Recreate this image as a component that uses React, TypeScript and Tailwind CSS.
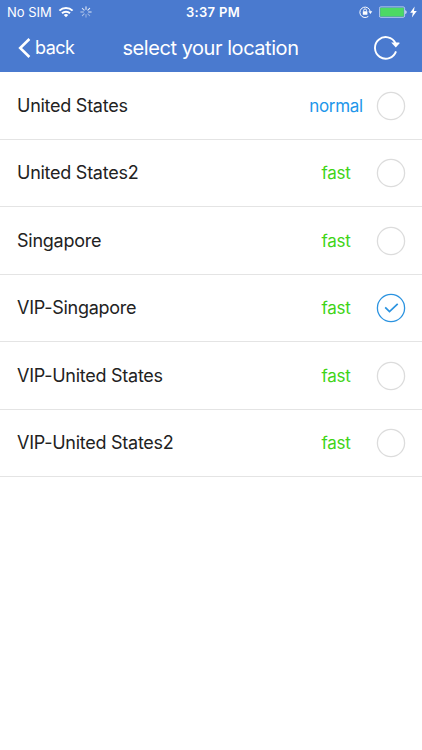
import React from "react";
import clsx from "clsx";

const locations = [
  { name: "United States", speed: "normal" },
  { name: "United States2", speed: "fast" },
  { name: "Singapore", speed: "fast" },
  { name: "VIP-Singapore", speed: "fast", selected: true },
  { name: "VIP-United States", speed: "fast" },
  { name: "VIP-United States2", speed: "fast" },
];

const spokes = [0.95, 0.9, 0.85, 0.4, 0.45, 0.55, 0.65, 0.8];

function WifiIcon() {
  return (
    <svg width="16" height="12" viewBox="0 0 16 12" fill="none" stroke="white" strokeWidth="2">
      <path d="M1.4 4.6a9.4 9.4 0 0 1 13.2 0" />
      <path d="M4 7.3a5.7 5.7 0 0 1 8 0" />
      <path d="M8 11.3 5.8 9.1a3.2 3.2 0 0 1 4.4 0z" fill="white" stroke="none" />
    </svg>
  );
}

function Spinner() {
  return (
    <svg width="12" height="12" viewBox="0 0 12 12" stroke="white" strokeWidth="1" strokeLinecap="round">
      {spokes.map((opacity, i) => (
        <path key={i} d="M6 3.4V0.8" opacity={opacity} transform={`rotate(${i * 45} 6 6)`} />
      ))}
    </svg>
  );
}

function RotationLockIcon() {
  return (
    <svg width="14" height="12" viewBox="0 0 14 12" fill="none" stroke="white">
      <path d="M9.3 10.4A5.2 5.2 0 1 1 11.2 5.4" strokeWidth="1" />
      <path d="M9.4 5.2h3.9l-1.9 2.7z" fill="white" stroke="none" />
      <rect x="3.8" y="5.2" width="4.6" height="3.6" rx="0.4" fill="white" stroke="none" />
      <path d="M4.7 5.4V4.3a1.4 1.4 0 0 1 2.8 0v1.1" strokeWidth="0.9" />
    </svg>
  );
}

function BatteryIcon() {
  return (
    <svg width="28" height="12" viewBox="0 0 28 12">
      <rect x="0.4" y="0.9" width="25.2" height="10.4" rx="1.4" fill="none" stroke="white" strokeOpacity="0.75" strokeWidth="0.8" />
      <rect x="1.2" y="1.7" width="23.6" height="8.8" rx="0.6" fill="#4cd964" />
      <path d="M26.4 4.2c1.5.3 1.5 3.5 0 3.8z" fill="white" />
    </svg>
  );
}

function StatusBar() {
  return (
    <div className="flex h-6 items-center text-[13px] leading-4">
      <div className="flex w-[186px] items-center pl-[7px]">
        <span className="w-[51px] whitespace-nowrap">No SIM</span>
        <WifiIcon />
        <span className="ml-[6px]">
          <Spinner />
        </span>
      </div>
      <span className="w-[55px] whitespace-nowrap font-semibold tracking-[0.3px]">3:37 PM</span>
      <div className="ml-auto flex items-center pr-[5px]">
        <RotationLockIcon />
        <span className="ml-[6px]">
          <BatteryIcon />
        </span>
        <svg className="ml-[3px]" width="7" height="12" viewBox="0 0 7 12">
          <path d="M4.6 0.6 0.2 6.8h2.6L1.9 11.4 6.8 5.1H4z" fill="white" />
        </svg>
      </div>
    </div>
  );
}

function NavBar() {
  return (
    <div className="grid h-12 grid-cols-[98px_226px_98px] items-center">
      <button className="flex items-center pl-[18px]">
        <svg width="13" height="20" viewBox="0 0 13 20" fill="none" stroke="white" strokeWidth="2.6">
          <path d="M11.4 1 2.2 10l9.2 9" />
        </svg>
        <span className="ml-[4px] text-[18px] leading-6 tracking-[-0.5px]">back</span>
      </button>
      <h1 className="-ml-px whitespace-nowrap text-center text-[20px] leading-6 tracking-[-0.45px]">
        select your location
      </h1>
      <button className="pl-[49px]">
        <svg width="27" height="24" viewBox="0 0 27 24" fill="none" stroke="white" strokeWidth="1.9">
          <path d="M23 15.4A10.8 10.8 0 1 1 22.5 7.2" />
          <path d="M18.2 6.4h8.2v1l-3.6 4z" fill="white" stroke="none" />
        </svg>
      </button>
    </div>
  );
}

function Radio({ selected }: { selected?: boolean }) {
  return (
    <svg width="30" height="30" viewBox="0 0 30 30" fill="none">
      <circle cx="15" cy="15" r="13.6" stroke={selected ? "#2b93e0" : "#dcdcdc"} strokeWidth="1.3" />
      {selected && <path d="m9.2 14.3 4.3 4.3 8.2-7.8" stroke="#2b93e0" strokeWidth="1.7" />}
    </svg>
  );
}

function App() {
  return (
    <div className="min-h-screen bg-white font-['Inter',sans-serif]">
      <header className="h-[72px] bg-[#4a7acf] text-white">
        <StatusBar />
        <NavBar />
      </header>
      <ul>
        {locations.map(({ name, speed, selected }) => (
          <li
            key={name}
            className="flex h-[67.5px] items-center border-b border-[#e4e4e4] pl-[17px] pr-4 pt-px"
          >
            <span className="flex-1 text-[18px] leading-6 tracking-[-0.26px] text-[#222222]">{name}</span>
            <span
              className={clsx(
                "w-[60px] text-center text-[17px] leading-6 tracking-[-0.3px]",
                speed === "fast" ? "text-[#3fd418]" : "text-[#2196ea]"
              )}
            >
              {speed}
            </span>
            <span className="ml-[10px]">
              <Radio selected={selected} />
            </span>
          </li>
        ))}
      </ul>
    </div>
  );
}

export default App;
